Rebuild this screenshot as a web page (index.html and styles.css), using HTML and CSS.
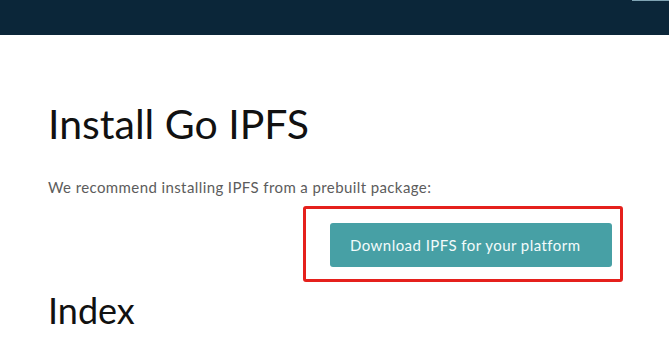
FILE: index.html
```html
<!DOCTYPE html>
<html lang="en">
<head>
<meta charset="utf-8">
<title>Install Go IPFS</title>
<link rel="stylesheet" href="styles.css">
</head>
<body>
<header class="topbar"><span class="topbar-edge"></span></header>
<main class="content">
  <h1 class="title">Install Go IPFS</h1>
  <p class="lead">We recommend installing IPFS from a prebuilt package:</p>
  <div class="cta-row">
    <div class="highlight">
      <a class="btn" href="#">Download IPFS for your platform</a>
    </div>
  </div>
  <h2 class="subtitle">Index</h2>
</main>
</body>
</html>
```
FILE: styles.css
```css
*, *::before, *::after {
  box-sizing: border-box;
}
html, body {
  margin: 0;
  padding: 0;
  background: #ffffff;
}
body {
  font-family: Lato, "Open Sans", sans-serif;
  width: 669px;
  height: 354px;
  overflow: hidden;
}
.topbar {
  height: 35px;
  background: #0b2639;
  display: flex;
  justify-content: flex-end;
  align-items: flex-start;
}
.topbar-edge {
  width: 37px;
  height: 1px;
  background: #7fa3b3;
}
.content {
  padding-left: 48px;
}
.title {
  margin: 0;
  padding-top: 61px;
  font-size: 41px;
  font-weight: 400;
  line-height: 56px;
  color: #111;
}
.lead {
  margin: 25px 0 0;
  font-size: 15px;
  letter-spacing: 0.4px;
  line-height: 20px;
  color: #5c5c5c;
}
.cta-row {
  display: flex;
  margin-top: 9px;
  padding-left: 255px;
}
.highlight {
  width: 320px;
  height: 76px;
  border: 3px solid #e5201c;
  border-radius: 3px;
  padding: 14px 8px 12px 24px;
  display: flex;
}
.btn {
  flex: 1;
  display: flex;
  align-items: center;
  padding-left: 20px;
  background: #47a0a5;
  border-radius: 3px;
  color: #f3fbfb;
  font-size: 15px;
  letter-spacing: 0.45px;
  text-decoration: none;
}
.subtitle {
  margin: 0;
  padding-top: 6px;
  font-size: 36px;
  font-weight: 400;
  line-height: 44px;
  color: #111;
}
```
